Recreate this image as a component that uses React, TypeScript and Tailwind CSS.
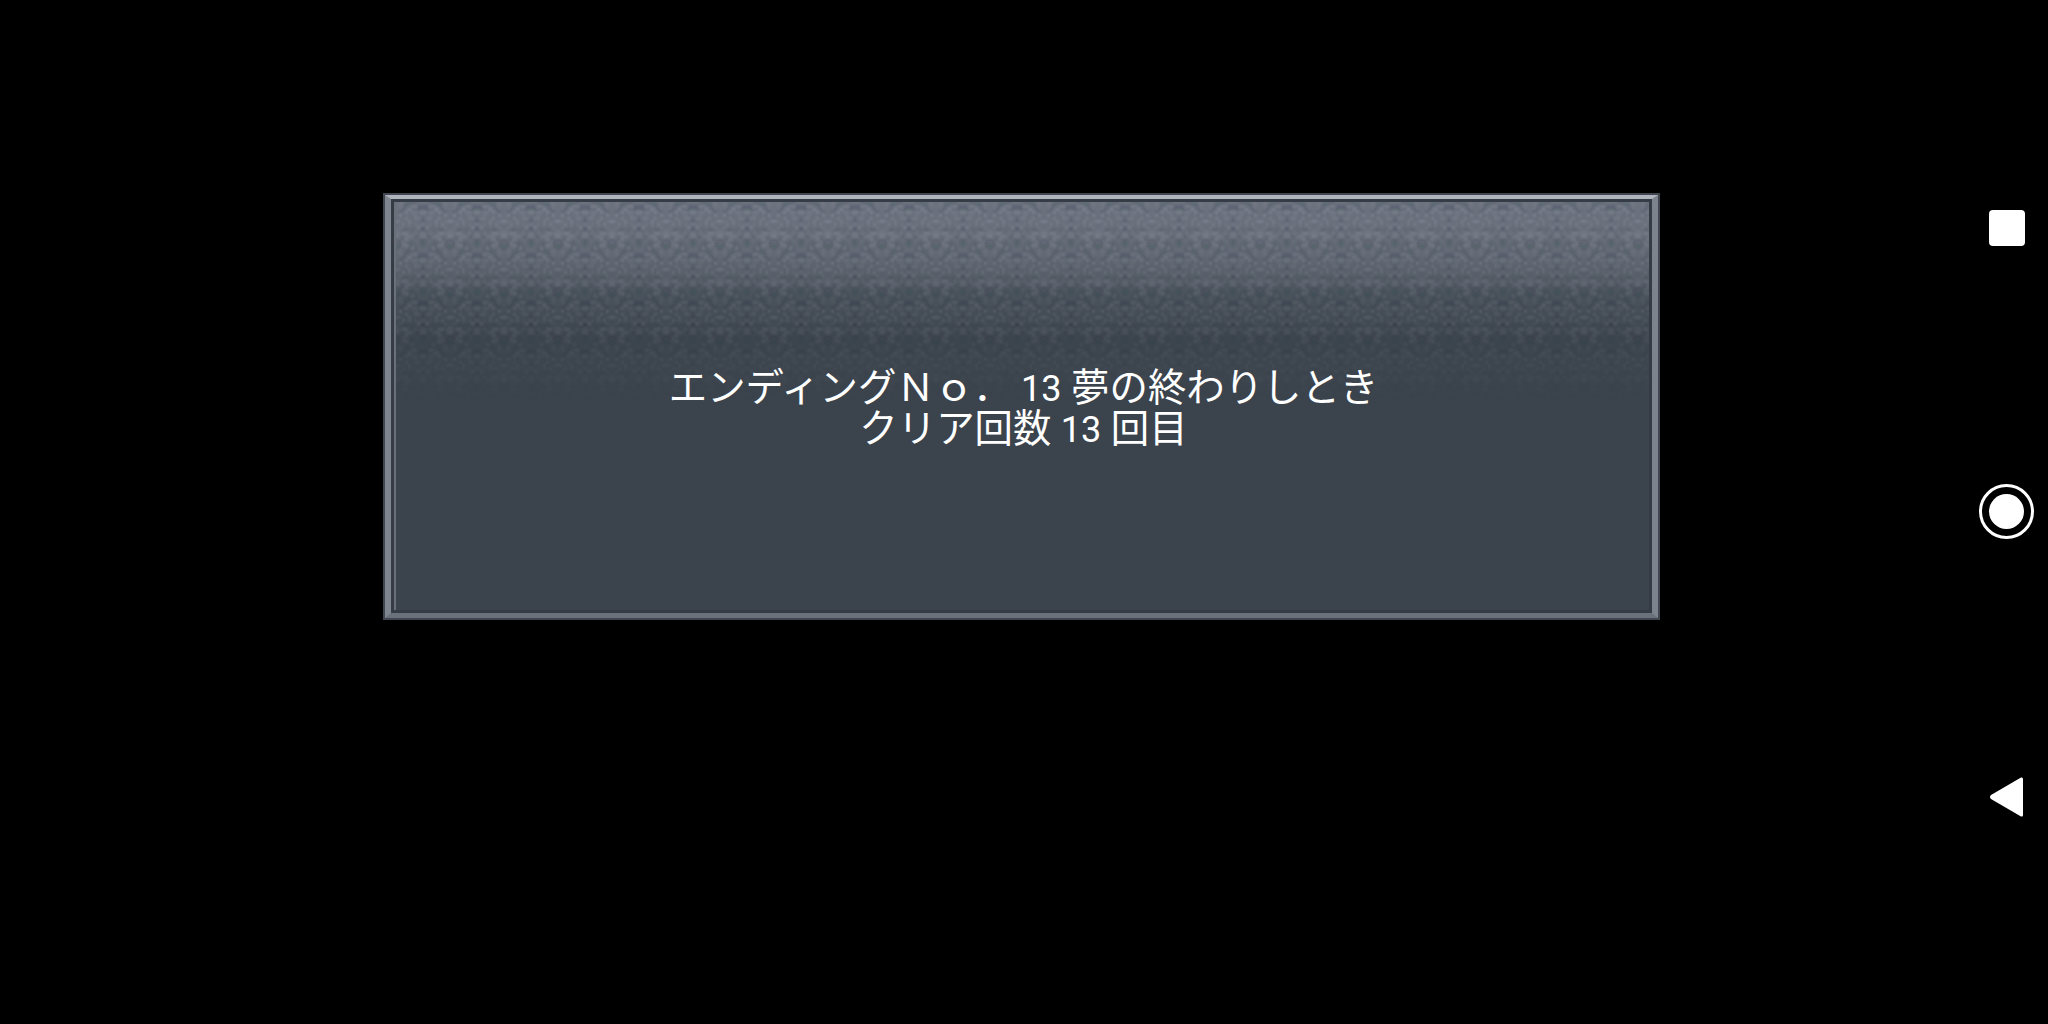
const seed = (x: number, y: number) => {
  const v = Math.sin(x * 12.9898 + y * 78.233) * 43758.5453;
  return v - Math.floor(v);
};

// motif en miroir, repete tous les 54px comme dans la texture d'origine
const cells: { x: number; y: number; light: boolean; o: number }[] = [];
for (let y = 0; y < 16; y++) {
  for (let x = 0; x < 9; x++) {
    const r = seed(x, y);
    if (r > 0.35) {
      const o = 0.05 + seed(y + 3, x + 7) * 0.13;
      cells.push({ x: x * 3, y: y * 3, light: r > 0.68, o });
      cells.push({ x: (17 - x) * 3, y: y * 3, light: r > 0.68, o });
    }
  }
}

function Grain() {
  return (
    <svg className="absolute inset-x-0 top-0 h-[200px] w-full" aria-hidden="true">
      <defs>
        <pattern id="grain" width="54" height="48" patternUnits="userSpaceOnUse">
          {cells.map((c, i) => (
            <rect key={i} x={c.x} y={c.y} width="3" height="3" fill={c.light ? "#c8ccd8" : "#1c222c"} opacity={c.o} />
          ))}
        </pattern>
        <linearGradient id="fade" x1="0" y1="0" x2="0" y2="1">
          <stop offset="0" stopColor="#fff" />
          <stop offset="0.6" stopColor="#bbb" />
          <stop offset="1" stopColor="#000" />
        </linearGradient>
        <mask id="fadeMask">
          <rect width="100%" height="100%" fill="url(#fade)" />
        </mask>
        <filter id="soft">
          <feGaussianBlur stdDeviation="0.9" />
        </filter>
      </defs>
      <rect width="100%" height="100%" fill="url(#grain)" mask="url(#fadeMask)" filter="url(#soft)" />
    </svg>
  );
}

export default function App() {
  return (
    <div className="w-full h-screen bg-black flex justify-between overflow-hidden font-['Roboto','Noto_Sans_CJK_JP',sans-serif]">
      <div className="ml-[383px] mt-[193px] w-[1277px] h-[427px] border-[2px] border-[#3f4650]">
        <div className="w-full h-full border-t-[4px] border-x-[6px] border-b-[5px] border-t-[#b0b4bc] border-l-[#7f858f] border-r-[#7d838c] border-b-[#6b717b]">
          <div className="w-full h-full border-[3px] border-[#353c45]">
            <div className="relative w-full h-full border-l-[2px] border-[#6a707a] bg-[linear-gradient(to_bottom,#6c737f_0px,#646b76_50px,#4a525c_95px,#3e464f_130px,#3b434c_190px)]">
              <Grain />
              <div className="relative pt-[166px] pl-[2px] flex flex-col items-center text-white text-[38.4px] leading-[40px] whitespace-nowrap">
                <span>エンディングＮｏ． <span className="text-[36px]">13</span> 夢の終わりしとき</span>
                <span>クリア回数 <span className="text-[36px]">13</span> 回目</span>
              </div>
            </div>
          </div>
        </div>
      </div>

      <div className="w-[55px] mr-[14px] flex flex-col items-center text-white">
        <div className="mt-[210px] ml-[1px] w-[36px] h-[36px] rounded-[4px] bg-white"></div>
        <div className="mt-[238px] w-[55px] h-[55px] rounded-full border-[3px] border-white flex items-center justify-center">
          <div className="w-[35px] h-[35px] rounded-full bg-white"></div>
        </div>
        <svg className="mt-[237px] mr-[2px]" width="36" height="42" viewBox="0 0 36 42">
          <path d="M33 1.5 L3 19 Q1 21 3 23 L33 40.5 Q35 41 35 39 L35 3 Q35 1 33 1.5 Z" fill="#ffffff" />
        </svg>
      </div>
    </div>
  );
}
